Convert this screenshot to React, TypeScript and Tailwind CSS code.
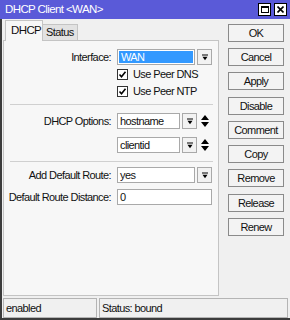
import React from "react";

const DropIcon = () => (
  <svg width="6" height="7" viewBox="0 0 6 7">
    <rect x="0" y="0.5" width="6" height="1" fill="#000" />
    <path d="M0.5 2.8 H5.5 L3 6.3 Z" fill="#000" />
  </svg>
);

const UpDown = () => (
  <svg width="8" height="12" viewBox="0 0 8 12">
    <path d="M4 0 L8 5 H0 Z M0 7 H8 L4 12 Z" fill="#000" />
  </svg>
);

const DropBtn = () => (
  <div className="w-[15px] h-[16px] border border-[#a9a9a9] bg-[#f2f2f2] flex items-center justify-center shrink-0">
    <DropIcon />
  </div>
);

const Check = ({ label }: { label: string }) => (
  <div className="h-[17px] flex items-center">
    <div className="w-[11px] h-[11px] border border-[#333] bg-white flex items-center justify-center">
      <svg width="9" height="9" viewBox="0 0 9 9">
        <path d="M1.5 4.5 L3.5 6.8 L7.5 1.8" stroke="#000" strokeWidth="1.6" fill="none" />
      </svg>
    </div>
    <span className="ml-[5px]">{label}</span>
  </div>
);

const Btn = ({ children, extra = "" }: { children: React.ReactNode; extra?: string }) => (
  <div
    className={`h-[18px] w-[56px] border border-[#8a8a8a] bg-[#f3f3f3] flex items-center justify-center ${extra}`}
  >
    {children}
  </div>
);

const Label = ({ children }: { children?: React.ReactNode }) => (
  <div className="w-[107px] text-right shrink-0">{children}</div>
);

export default function App() {
  return (
    <div className="w-[290px] h-[320px] bg-[#f0f0f0] flex flex-col border-b-2 border-[#3c3c3c] font-['Liberation_Sans',Arial,sans-serif] text-[11px] tracking-[-0.6px] text-[#111] overflow-hidden">
      {/* Title bar */}
      <div className="h-[19px] bg-[#5a5ad8] flex items-center justify-between pl-[5px] pr-[3px] shrink-0">
        <span className="text-white text-[11.5px] leading-none">DHCP Client &lt;WAN&gt;</span>
        <div className="flex gap-[3px]">
          <div className="w-[13px] h-[13px] bg-white border border-black flex items-center justify-center">
            <div className="w-[8px] h-[7px] border border-black border-t-2" />
          </div>
          <div className="w-[13px] h-[13px] bg-white border border-black flex items-center justify-center">
            <svg width="7" height="7" viewBox="0 0 7 7">
              <path d="M0.5 0.5 L6.5 6.5 M6.5 0.5 L0.5 6.5" stroke="#000" strokeWidth="1.6" />
            </svg>
          </div>
        </div>
      </div>

      <div className="flex-1 flex flex-col border-l-2 border-[#3c3c3c]">
        {/* Body */}
        <div className="flex h-[279px]">
          {/* Left column */}
          <div className="w-[217px] flex flex-col">
            <div className="h-[21px] flex items-end pl-[3px] shrink-0">
              <div className="h-[21px] w-[38px] border border-b-0 border-[#c4c4c4] bg-[#f7f7f7] flex items-center pl-[5px] text-[11.5px] relative top-[1px]">
                DHCP
              </div>
              <div className="h-[16px] w-[35px] border border-l-0 border-b-0 border-[#c4c4c4] bg-[#e2e2e2] flex items-center pl-[3px]">
                Status
              </div>
            </div>
            <div className="ml-[1px] h-[256px] border border-[#c4c4c4] bg-[#f7f7f7] flex flex-col pt-[8px]">
              {/* Interface */}
              <div className="flex items-center h-[16px] gap-[6px]">
                <Label>Interface:</Label>
                <div className="w-[78px] h-[16px] border border-[#a9a9a9] bg-white p-[1px]">
                  <div className="w-full h-full bg-[#3399ff] text-white flex items-center pl-[2px] leading-none">
                    WAN
                  </div>
                </div>
                <div className="-ml-[4px]">
                  <DropBtn />
                </div>
              </div>
              <div className="pl-[113px] mt-[1px]">
                <Check label="Use Peer DNS" />
                <Check label="Use Peer NTP" />
              </div>
              <div className="mt-[4px] ml-[6px] mr-[5px] h-px bg-[#d0d0d0]" />

              {/* DHCP options */}
              <div className="flex items-center h-[16px] gap-[6px] mt-[8px]">
                <Label>DHCP Options:</Label>
                <div className="w-[63px] h-[16px] border border-[#a9a9a9] bg-white flex items-center pl-[2px]">
                  hostname
                </div>
                <div className="-ml-[4px]">
                  <DropBtn />
                </div>
                <div className="-ml-[2px]">
                  <UpDown />
                </div>
              </div>
              <div className="flex items-center h-[16px] gap-[6px] mt-[8px]">
                <Label />
                <div className="w-[63px] h-[16px] border border-[#a9a9a9] bg-white flex items-center pl-[2px]">
                  clientid
                </div>
                <div className="-ml-[4px]">
                  <DropBtn />
                </div>
                <div className="-ml-[2px]">
                  <UpDown />
                </div>
              </div>
              <div className="mt-[8px] ml-[6px] mr-[5px] h-px bg-[#d0d0d0]" />

              {/* Route */}
              <div className="flex items-center h-[16px] gap-[6px] mt-[5px]">
                <Label>Add Default Route:</Label>
                <div className="w-[78px] h-[16px] border border-[#a9a9a9] bg-white flex items-center pl-[2px]">
                  yes
                </div>
                <div className="-ml-[4px]">
                  <DropBtn />
                </div>
              </div>
              <div className="flex items-center h-[16px] gap-[6px] mt-[6px]">
                <Label>Default Route Distance:</Label>
                <div className="w-[95px] h-[16px] border border-[#a9a9a9] bg-white flex items-center pl-[2px]">
                  0
                </div>
              </div>
            </div>
          </div>

          {/* Right buttons */}
          <div className="ml-[9px] pt-[5px] flex flex-col gap-[6px]">
            <Btn>OK</Btn>
            <Btn>Cancel</Btn>
            <Btn>Apply</Btn>
            <Btn extra="mt-[1px]">Disable</Btn>
            <Btn>Comment</Btn>
            <Btn>Copy</Btn>
            <Btn>Remove</Btn>
            <Btn extra="mt-[1px]">Release</Btn>
            <Btn>Renew</Btn>
          </div>
        </div>

        {/* Status bar */}
        <div className="h-[20px] flex gap-[2px] pl-[1px] pr-[2px]">
          <div className="w-[94px] h-full border border-[#b4b4b4] flex items-center pl-[2px]">enabled</div>
          <div className="flex-1 h-full border border-[#b4b4b4] flex items-center pl-[2px]">Status: bound</div>
        </div>
      </div>
    </div>
  );
}
